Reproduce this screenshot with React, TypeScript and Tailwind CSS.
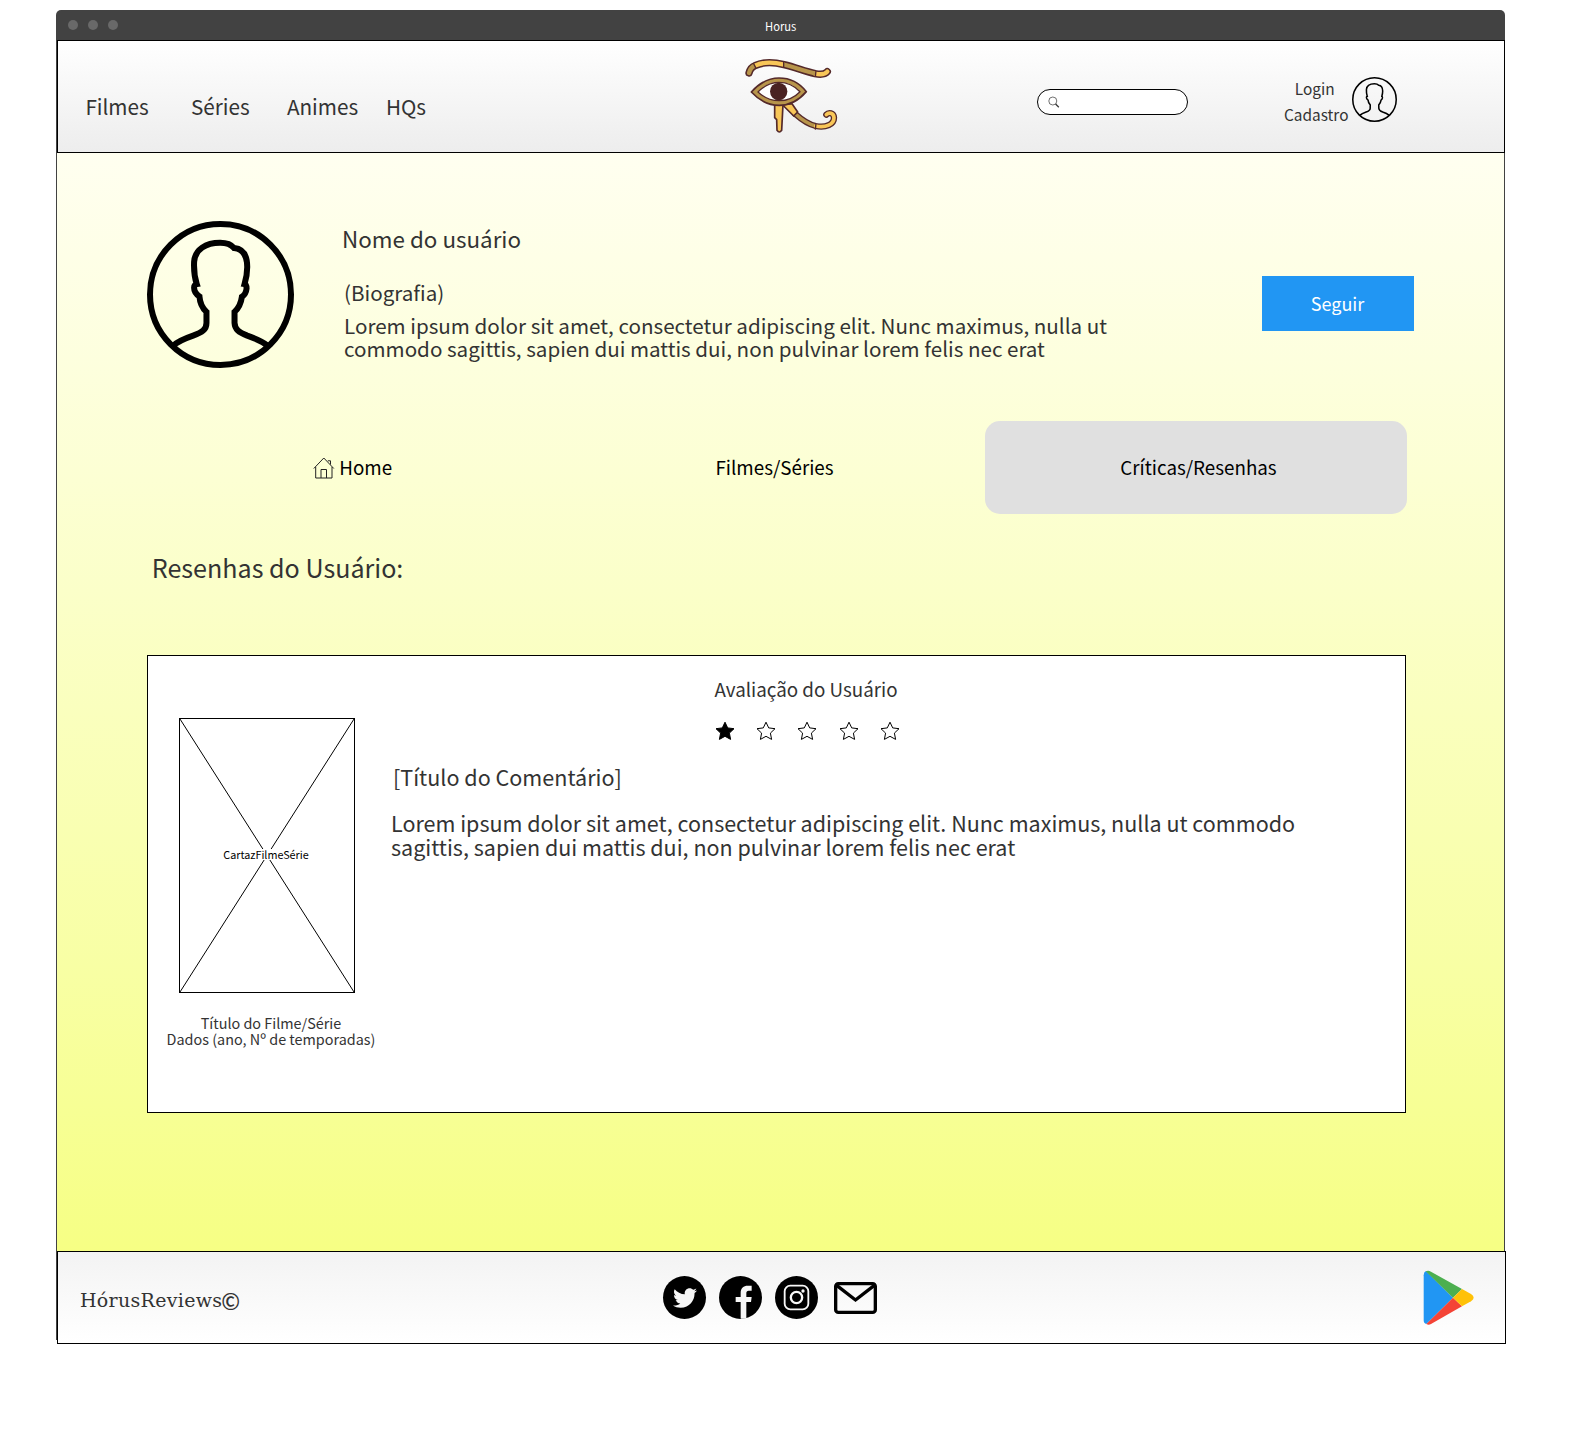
import React from "react";
import { FaTwitter } from "react-icons/fa";

function Avatar({ className, stroke }: { className: string; stroke: number }) {
  return (
    <svg className={className} viewBox="0 0 440 440" fill="none" stroke="#000" strokeWidth={stroke}>
      <circle cx="220" cy="220" r={220 - stroke / 2} />
      <path d="M79 373C92 360 112 352 138 343C165 333 178 325 178 305V272C165 260 158 240 157 226C148 220 141 210 141 200C141 192 144 190 149 189C141 165 140 145 141 122C144 85 176 65 219 65C238 65 252 70 261 81C290 84 300 108 300 138C300 155 297 172 292 189C297 190 298 195 298 202C297 212 292 222 284 227C282 242 275 260 262 272V305C263 325 275 333 300 343C325 352 345 360 361 373" />
    </svg>
  );
}

function EyeOfHorus() {
  const dark = "#b8954b";
  const light = "#f8c658";
  const line = "#54292a";
  return (
    <svg className="mt-[4px] ml-[304px] h-[100px] w-[120px] shrink-0" viewBox="0 0 360 300" fill="none">
      <path d="M57 84C60 72 66 65 75 62C100 50 135 52 162 59C195 67 220 77 255 86C275 90 286 87 292 80" stroke={line} strokeWidth="22" strokeLinecap="round" />
      <path d="M57 84C60 72 66 65 75 62" stroke={dark} strokeWidth="13" strokeLinecap="round" />
      <path d="M255 86C275 90 286 87 292 80" stroke={light} strokeWidth="13" strokeLinecap="round" />
      <path d="M75 62C100 50 135 52 162 59" stroke={light} strokeWidth="13" />
      <path d="M160 58.500C195 67 220 77 257 86" stroke={dark} strokeWidth="13" />
      <path d="M70 54L78 70M161 49V69M258 77L256 96" stroke={line} strokeWidth="4" />
      <path d="M134 178V218L140 224L141 256Q148 266 155 256L159 178Z" fill={light} stroke={line} strokeWidth="5" strokeLinejoin="round" />
      <path d="M196 207C215 224 235 238 257 243C288 249 312 238 312 218C311 203 296 201 289 209" stroke={line} strokeWidth="19" strokeLinecap="round" />
      <path d="M196 207C215 224 235 238 257 243" stroke={dark} strokeWidth="11" />
      <path d="M257 243C288 249 312 238 312 218C311 203 296 201 289 209" stroke={light} strokeWidth="11" strokeLinecap="round" />
      <path d="M158 180L186 176L203 201L191 213Z" fill={light} stroke={line} strokeWidth="5" strokeLinejoin="round" />
      <path d="M258 235L256 254" stroke={line} strokeWidth="4" />
      <path d="M64 141C90 112 115 99 147 99C182 99 208 113 229 140C205 168 182 181 148 181C114 181 90 169 64 141Z" fill={dark} stroke={line} strokeWidth="5" strokeLinejoin="round" />
      <path d="M84 141C104 121 122 112 147 112C174 112 192 121 210 140C191 160 172 167 147 167C122 167 104 160 84 141Z" fill="#fff" stroke={line} strokeWidth="4" strokeLinejoin="round" />
      <circle cx="146" cy="139.500" r="26" fill="#4a2222" />
    </svg>
  );
}

function Star({ filled }: { filled?: boolean }) {
  return (
    <svg className="h-[20px] w-[20px]" viewBox="0 0 20 20" fill={filled ? "#000" : "none"} stroke="#000" strokeWidth="1">
      <path d="M10 1.200L12.700 6.900L19 7.700L14.400 12.100L15.600 18.400L10 15.300L4.400 18.400L5.600 12.100L1 7.700L7.300 6.900Z" />
    </svg>
  );
}

function TitleBar() {
  return (
    <div className="flex h-[30px] items-center rounded-t-[5px] bg-[#424242] pl-[11.500px]">
      <div className="flex gap-[10px]">
        <span className="size-[10px] rounded-full bg-[#696969]" />
        <span className="size-[10px] rounded-full bg-[#696969]" />
        <span className="size-[10px] rounded-full bg-[#696969]" />
      </div>
      <span className="mt-px ml-[647.500px] text-[11.200px] leading-[16px] text-white">Horus</span>
    </div>
  );
}

function Header() {
  return (
    <header className="flex h-[113px] w-[1448px] items-start border border-black bg-linear-to-b from-white to-[#ededed]">
      <nav className="mt-[53px] flex w-[368px] shrink-0 pl-[27.400px] text-[20.700px] leading-[24px]">
        <a className="w-[105.600px]">Filmes</a>
        <a className="w-[96px]">Séries</a>
        <a className="w-[99px]">Animes</a>
        <a>HQs</a>
      </nav>
      <EyeOfHorus />
      <div className="mt-[48px] ml-[187px] flex h-[26px] w-[151px] shrink-0 items-center rounded-full border border-black bg-white pl-[9.500px]">
        <svg className="size-[12px]" viewBox="0 0 12 12" fill="none" stroke="#333">
          <circle cx="4.800" cy="5" r="4" strokeWidth="0.700" />
          <path d="M7.600 8L10.800 11.200" strokeWidth="1.300" />
        </svg>
      </div>
      <div className="mt-[34px] ml-[96px] w-[68.200px] shrink-0 text-[15.400px] leading-[26px]">
        <div className="pl-[10.800px]">Login</div>
        <div>Cadastro</div>
      </div>
      <Avatar className="mt-[35.500px] size-[45px] shrink-0" stroke={15} />
    </header>
  );
}

function Profile() {
  return (
    <section className="flex h-[147px] items-start pl-[90px]">
      <Avatar className="size-[147px] shrink-0" stroke={18} />
      <div className="ml-[48px] w-[920px] shrink-0 whitespace-nowrap text-[20.600px] leading-[23px]">
        <h1 className="mt-[5px] text-[22.400px] leading-[24px]">Nome do usuário</h1>
        <div className="mt-[30.500px] pl-[2px]">(Biografia)</div>
        <p className="mt-[10px] pl-[2px]">
          Lorem ipsum dolor sit amet, consectetur adipiscing elit. Nunc maximus, nulla ut
          <br />
          commodo sagittis, sapien dui mattis dui, non pulvinar lorem felis nec erat
        </p>
      </div>
      <button className="mt-[55px] h-[55px] w-[152px] shrink-0 bg-[#2196f3] pr-px text-[18px] text-white">Seguir</button>
    </section>
  );
}

function Tabs() {
  return (
    <nav className="mt-[53px] ml-[90px] flex h-[93px] text-[18.800px] text-black">
      <a className="flex w-[418px] items-center justify-center gap-[4px] pr-[6.500px]">
        <svg className="size-[22px]" viewBox="0 0 22 22" fill="none" stroke="#222" strokeWidth="1">
          <path d="M.8 11.500L10.800 1L20.800 11.500M2.700 10V21H19V10M8 21V12.500H13.500V21M14.800 3.800H17.500V7.500" />
        </svg>
        Home
      </a>
      <a className="flex w-[420px] items-center justify-center pr-px">Filmes/Séries</a>
      <a className="flex w-[422px] items-center justify-center rounded-[15px] bg-[#e0e0e0] pl-[5px]">Críticas/Resenhas</a>
    </nav>
  );
}

function ReviewCard() {
  return (
    <article className="mt-[72.500px] ml-[90px] flex h-[458px] w-[1259px] border border-black bg-white">
      <div className="w-[243px] shrink-0 pt-[62px]">
        <div className="relative ml-[31px] flex h-[275px] w-[176px] items-center justify-center border border-black">
          <svg className="absolute inset-0 h-full w-full" viewBox="0 0 174 273" stroke="#000" strokeWidth="1">
            <path d="M0 0L174 273M174 0L0 273" />
          </svg>
          <span className="relative mr-[2px] mb-[2px] bg-white text-[10.800px] leading-[11px] text-black">CartazFilmeSérie</span>
        </div>
        <div className="mt-[22px] ml-[3px] text-center text-[14.400px] leading-[16px] whitespace-nowrap">
          Título do Filme/Série
          <br />
          Dados (ano, Nº de temporadas)
        </div>
      </div>
      <div className="whitespace-nowrap">
        <h3 className="mt-[21px] ml-[323.500px] text-[18.800px] leading-[24px]">Avaliação do Usuário</h3>
        <div className="mt-[20px] ml-[324px] flex gap-[21.200px]">
          <Star filled />
          <Star />
          <Star />
          <Star />
          <Star />
        </div>
        <h4 className="mt-[24px] ml-[2px] text-[21.550px] leading-[24px]">[Título do Comentário]</h4>
        <p className="mt-[22px] text-[21.500px] leading-[24px]">
          Lorem ipsum dolor sit amet, consectetur adipiscing elit. Nunc maximus, nulla ut commodo
          <br />
          sagittis, sapien dui mattis dui, non pulvinar lorem felis nec erat
        </p>
      </div>
    </article>
  );
}

function Footer() {
  return (
    <footer className="flex h-[93px] w-[1449px] items-center border border-black bg-linear-to-b from-[#f3f3f3] to-white">
      <div className="mt-[4px] ml-[22px] flex w-[583px] shrink-0 items-center font-['DejaVu_Serif'] text-[19px] leading-[24px] tracking-[0.300px]">
        HórusReviews
        <span className="-ml-px font-['Noto_Sans_CJK_SC'] text-[22.500px] leading-[24px] font-medium">©</span>
      </div>
      <div className="flex w-[760px] shrink-0 items-center gap-[13px]">
        <span className="flex size-[43px] items-center justify-center rounded-full bg-black text-[24px] text-[#f6f6f6]">
          <FaTwitter />
        </span>
        <svg className="size-[43px]" viewBox="0 0 129 129">
          <circle cx="64.500" cy="64.500" r="64.500" fill="#000" />
          <path d="M65 128V78H50V63H65V51C65 36 74 29 86 29H98V44H89C84 44 82 47 82 52V63H98L96 78H82V128Z" fill="#f6f6f6" />
        </svg>
        <svg className="size-[43px]" viewBox="0 0 129 129" fill="none" stroke="#f8f8f8" strokeWidth="5.500">
          <circle cx="64.500" cy="64.500" r="64.500" fill="#000" stroke="none" />
          <rect x="29" y="29" width="71" height="71" rx="17" />
          <circle cx="64.500" cy="64.500" r="17" strokeWidth="7" />
          <circle cx="84" cy="45" r="5" fill="#f8f8f8" stroke="none" />
        </svg>
        <svg className="ml-[3px] h-[32px] w-[43px]" viewBox="0 0 129 96" fill="none" stroke="#000" strokeWidth="10">
          <rect x="5" y="5" width="119" height="86" rx="8" />
          <path d="M8 10L64.500 54L121 10" />
        </svg>
      </div>
      <svg className="h-[56px] w-[52px] shrink-0" viewBox="0 0 156 168">
        <path d="M2 16Q2 6 9 3L90 83L10 162Q2 160 2 150Z" fill="#2196f3" />
        <path d="M8 4Q16 0 24 5L117 57L90 83Z" fill="#4caf50" />
        <path d="M10 162Q17 166 24 162L117 109L90 83Z" fill="#f44336" />
        <path d="M117 57L144 72Q160 83 144 94L117 109L90 83Z" fill="#ffc107" />
      </svg>
    </footer>
  );
}

export default function App() {
  return (
    <div className="h-[1443px] w-[1570px] overflow-hidden bg-white pt-[10px] pl-[56px] font-['Noto_Sans_CJK_SC',sans-serif] text-[#333]">
      <div className="w-[1449px]">
        <TitleBar />
        <div className="h-[1300px] border-x border-[#424242]">
          <Header />
          <main className="h-[1098px] bg-linear-to-b from-[#fffff0] to-[#f6ff84] pt-[68px]">
            <Profile />
            <Tabs />
            <h2 className="mt-[37.500px] ml-[94.800px] text-[25.100px] leading-[31px]">Resenhas do Usuário:</h2>
            <ReviewCard />
          </main>
          <Footer />
        </div>
      </div>
    </div>
  );
}
